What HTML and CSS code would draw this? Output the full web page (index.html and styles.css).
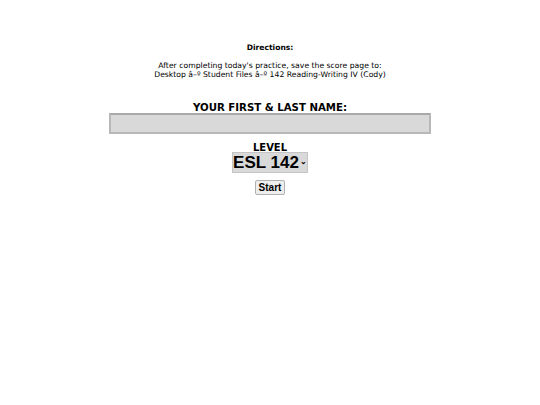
FILE: index.html
```html
<!DOCTYPE html>
<html>
<head>
<meta charset="utf-8">
<link rel="stylesheet" href="styles.css">
</head>
<body>
<div class="page">
  <p class="dir-title">Directions:</p>
  <p class="dir-text">After completing today's practice, save the score page to:<br>Desktop â–º Student Files â–º 142 Reading-Writing IV (Cody)</p>
  <p class="name-label">YOUR FIRST &amp; LAST NAME:</p>
  <div class="name-input"></div>
  <p class="level-label">LEVEL</p>
  <div class="select">ESL 142<span class="caret">⌄</span></div>
  <div class="start">Start</div>
</div>
</body>
</html>
```
FILE: styles.css
```css
html, body { margin: 0; padding: 0; background: #fff; }
body { font-family: "DejaVu Sans", Verdana, sans-serif; color: #000; }
.page { display: flex; flex-direction: column; align-items: center; padding-top: 43px; }
p { margin: 0; text-align: center; }
.dir-title { font-size: 7.6px; font-weight: bold; line-height: 10px; }
.dir-text { font-size: 7.7px; line-height: 9px; margin-top: 8px; }
.name-label { font-size: 10.2px; font-weight: bold; line-height: 12px; margin-top: 23px; }
.name-input { width: 318px; height: 17px; background: #d9d9d9; border: 2px solid #b8b8b8; border-top-color: #a9a9a9; margin-top: -1px; }
.level-label { font-size: 10px; font-weight: bold; line-height: 12px; margin-top: 8px; }
.select { box-sizing: border-box; width: 76px; height: 21px; margin-top: -2px; background: #d9d9d9; border: 1px solid #c4c4c4; font-family: "Liberation Sans", Arial, sans-serif; font-weight: bold; font-size: 17px; line-height: 19px; display: flex; align-items: center; justify-content: center; }
.caret { font-size: 8px; font-weight: bold; margin-left: 1px; line-height: 8px; margin-top: -2px; }
.start { box-sizing: border-box; width: 30px; height: 15px; margin-top: 7px; background: #eee; border: 1px solid #b0b0b0; border-radius: 2px; font-family: "Liberation Sans", Arial, sans-serif; font-weight: bold; font-size: 10px; line-height: 13px; text-align: center; }
```
